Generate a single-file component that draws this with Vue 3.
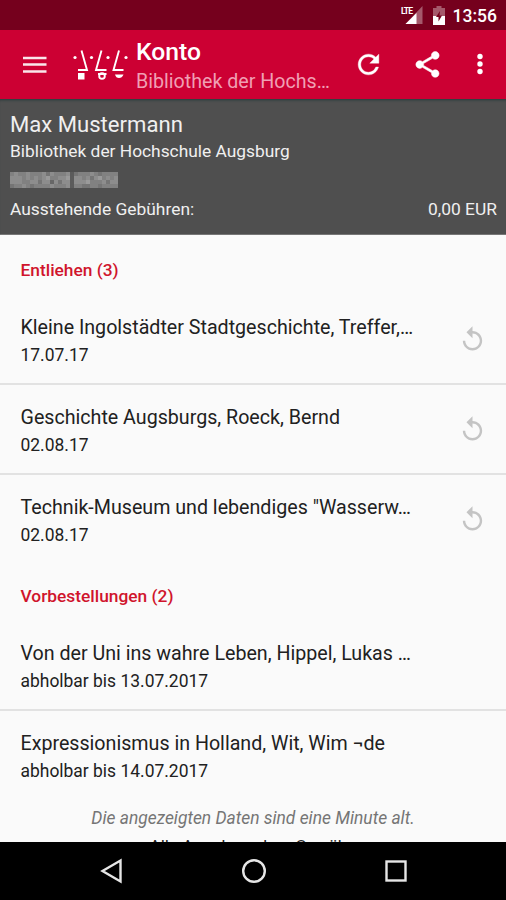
<template>
  <div class="screen">
    <div class="statusbar">
      <svg class="signal" width="22" height="20" viewBox="0 0 22 20">
        <path d="M21.500 1V19H4.500z" fill="#fff" opacity="0.35" />
        <path d="M15.500 8V19H4.500z" fill="#fff" />
        <text x="0" y="8.500" class="lte">LTE</text>
      </svg>
      <svg class="battery" width="12" height="19" viewBox="0 0 12 19">
        <path d="M3.500 2V0h5v2H12v8H0V2z" fill="#fff" opacity="0.35" />
        <path d="M0 10h12v9H0z" fill="#fff" />
        <path d="M7 5L3 11h2.500v4.500L9 9.500H6.500z" fill="#75001d" />
      </svg>
      <span class="clock">13:56</span>
    </div>

    <header class="toolbar">
      <svg class="menu" width="24" height="18" viewBox="0 0 24 18">
        <path d="M0 2H23.500M0 8.500H23.500M0 15.500H23.500" stroke="#fff" stroke-width="2.600" opacity="0.9" />
      </svg>
      <svg class="logo" width="56" height="32" viewBox="0 0 56 32">
        <g fill="none" stroke="#fff" stroke-width="1.900">
          <path d="M8.500 1.500L14 21H5" />
          <path d="M28.500 1.500L23 21H33.500" />
          <path d="M46 1.500L40.500 21H50.500" />
          <circle cx="29" cy="27" r="2.800" />
        </g>
        <g fill="#fff">
          <rect x="5" y="24" width="6.500" height="6.500" />
          <rect x="25" y="24" width="8.500" height="2" />
          <path d="M42 25.500H50.500Q49 29 46 29T42 25.500z" />
          <circle cx="2" cy="8.500" r="1.600" />
          <circle cx="18.500" cy="8.500" r="1.600" />
          <circle cx="35" cy="8.500" r="1.600" />
          <circle cx="53" cy="8.500" r="1.600" />
        </g>
      </svg>
      <div class="titles">
        <div class="title">Konto</div>
        <div class="subtitle">Bibliothek der Hochs…</div>
      </div>
      <svg class="refresh" width="31" height="31" viewBox="0 0 24 24" fill="#fff">
        <path d="M17.650 6.350C16.200 4.900 14.210 4 12 4c-4.420 0-7.990 3.580-7.990 8s3.570 8 7.990 8c3.730 0 6.840-2.550 7.730-6h-2.080c-.82 2.330-3.040 4-5.650 4-3.310 0-6-2.690-6-6s2.690-6 6-6c1.660 0 3.140.69 4.220 1.780L13 11h7V4l-2.350 2.350z" stroke="#fff" stroke-width="0.3" />
      </svg>
      <svg class="share" width="31" height="31" viewBox="0 0 24 24" fill="#fff">
        <path d="M18 16.080c-.76 0-1.440.3-1.960.77L8.910 12.700c.05-.23.09-.46.09-.7s-.04-.47-.09-.7l7.050-4.110c.54.5 1.250.81 2.040.81 1.660 0 3-1.340 3-3s-1.340-3-3-3-3 1.340-3 3c0 .24.04.47.09.7L8.040 9.810C7.500 9.310 6.790 9 6 9c-1.660 0-3 1.340-3 3s1.340 3 3 3c.79 0 1.500-.31 2.040-.81l7.120 4.160c-.05.21-.08.43-.08.65 0 1.610 1.310 2.920 2.920 2.920s2.920-1.310 2.920-2.920-1.310-2.920-2.920-2.920z" stroke="#fff" stroke-width="0.4" />
      </svg>
      <svg class="more" width="6" height="22" viewBox="0 0 6 22" fill="#fff">
        <circle cx="3" cy="3.500" r="2.700" />
        <circle cx="3" cy="11" r="2.700" />
        <circle cx="3" cy="18.500" r="2.700" />
      </svg>
    </header>

    <section class="account">
      <div class="name">Max Mustermann</div>
      <div class="library">Bibliothek der Hochschule Augsburg</div>
      <svg class="masked" width="110" height="16" viewBox="0 0 110 16">
        <rect
          v-for="(c, i) in maskCells"
          :key="i"
          :x="c.x"
          :y="c.y"
          width="4"
          height="4"
          fill="#fff"
          :opacity="c.opacity"
        />
      </svg>
      <div class="fees">
        <span>Ausstehende Gebühren:</span>
        <span>0,00 EUR</span>
      </div>
    </section>

    <main class="content">
      <section v-for="group in groups" :key="group.title">
        <h2 class="group-title">{{ group.title }} ({{ group.items.length }})</h2>
        <div v-for="item in group.items" :key="item.title" class="item">
          <div class="item-text">
            <div class="item-title">{{ item.title }}</div>
            <div class="item-info">{{ item.info }}</div>
          </div>
          <svg v-if="group.renewable" class="renew" width="29" height="29" viewBox="0 0 24 24" fill="#c4c4c4">
            <path d="M12 5V1L7 6l5 5V7c3.310 0 6 2.690 6 6s-2.690 6-6 6-6-2.690-6-6H4c0 4.420 3.580 8 8 8s8-3.580 8-8-3.580-8-8-8z" />
          </svg>
        </div>
      </section>
      <p class="age">Die angezeigten Daten sind eine Minute alt.</p>
      <p class="notice">Alle Angaben ohne Gewähr.</p>
    </main>

    <nav class="navbar">
      <svg width="24" height="26" viewBox="0 0 24 26">
        <path d="M20.500 2.500V23.500L2.500 13z" />
      </svg>
      <svg width="26" height="26" viewBox="0 0 26 26">
        <circle cx="13" cy="13" r="10.800" />
      </svg>
      <svg width="24" height="26" viewBox="0 0 24 26">
        <rect x="2.500" y="3.500" width="19" height="19" />
      </svg>
    </nav>
  </div>
</template>

<script setup>
const groups = [
  {
    title: 'Entliehen',
    renewable: true,
    items: [
      { title: 'Kleine Ingolstädter Stadtgeschichte, Treffer,…', info: '17.07.17' },
      { title: 'Geschichte Augsburgs, Roeck, Bernd', info: '02.08.17' },
      { title: 'Technik-Museum und lebendiges "Wasserw…', info: '02.08.17' }
    ]
  },
  {
    title: 'Vorbestellungen',
    renewable: false,
    items: [
      { title: 'Von der Uni ins wahre Leben, Hippel, Lukas …', info: 'abholbar bis 13.07.2017' },
      { title: 'Expressionismus in Holland, Wit, Wim ¬de', info: 'abholbar bis 14.07.2017' }
    ]
  }
]

// brightness of the pixelated account number, one digit per cell
const mask = [
  '454454445354445134445434444',
  '555454545644556155453564545',
  '555445535525355155564445355',
  '344543444454445144334434444'
]

const maskCells = mask.flatMap((row, y) =>
  [...row].map((v, x) => ({ x: x * 4, y: y * 4, opacity: v / 14 }))
)
</script>

<style>
body {
  margin: 0;
  background: #000;
}
</style>

<style scoped>
.screen {
  width: 506px;
  height: 900px;
  display: flex;
  flex-direction: column;
  overflow: hidden;
  background: #fafafa;
  font-family: Roboto, "Noto Sans", sans-serif;
  color: #212121;
}

.screen svg {
  display: block;
  flex: none;
}

.statusbar {
  flex: none;
  height: 30px;
  box-sizing: border-box;
  padding-right: 9px;
  display: flex;
  align-items: center;
  justify-content: flex-end;
  background: #75001d;
  color: #fff;
}

.signal {
  margin-right: 10px;
}

.battery {
  margin-right: 8px;
}

.lte {
  font-size: 8.500px;
  font-weight: 700;
  letter-spacing: -0.8px;
  fill: #fff;
}

.clock {
  font-size: 17.500px;
  font-weight: 500;
  line-height: 30px;
  padding-top: 2px;
}

.toolbar {
  flex: none;
  height: 69px;
  box-sizing: border-box;
  display: flex;
  align-items: center;
  padding: 0 23px;
  background: #cc0033;
  color: #fff;
}

.logo {
  margin-left: 26px;
}

.titles {
  width: 205px;
  margin-left: 7px;
  padding-top: 6px;
}

.title {
  font-size: 24.700px;
  font-weight: 500;
  line-height: 28px;
}

.subtitle {
  font-size: 19.650px;
  line-height: 32px;
  white-space: nowrap;
  color: #f09fb3;
}

.refresh {
  margin-left: 12px;
}

.share {
  margin: 0 0 1px 28px;
}

.more {
  margin: 0 0 1px 34px;
}

.account {
  flex: none;
  height: 136px;
  box-sizing: border-box;
  padding: 11px 9px 0 10px;
  background: #4f4f4f;
  color: #f0f0f0;
  box-shadow: inset 0 3px 3px -2px #233a3a, inset 0 -1px 0 #777;
}

.name {
  font-size: 22.100px;
  line-height: 29px;
}

.library {
  font-size: 17.350px;
  line-height: 25px;
}

.masked {
  margin-top: 8px;
}

.fees {
  display: flex;
  justify-content: space-between;
  margin-top: 9px;
  font-size: 17.400px;
  line-height: 24px;
}

.content {
  flex: 1;
  min-height: 0;
  overflow: hidden;
  padding-top: 4px;
}

.group-title {
  height: 56px;
  margin: 0;
  padding-left: 20.500px;
  font-size: 17.350px;
  font-weight: 500;
  line-height: 63px;
  color: #d0142c;
}

.item {
  height: 90px;
  box-sizing: border-box;
  display: flex;
  padding: 19px 19px 0 20.500px;
  border-bottom: 2px solid #e2e2e2;
}

.item:last-child {
  border-bottom-color: transparent;
}

.item-text {
  flex: 1;
}

.item-title {
  font-size: 19.650px;
  line-height: 27px;
  white-space: nowrap;
}

.item-info {
  font-size: 17.450px;
  line-height: 29px;
}

.renew {
  margin-top: 11px;
}

.age,
.notice {
  margin: 0;
  text-align: center;
  font-size: 17.400px;
  line-height: 28px;
}

.age {
  padding-top: 3px;
  font-style: italic;
  color: #757575;
}

.notice {
  font-size: 17px;
  line-height: 29px;
}

.navbar {
  flex: none;
  height: 58px;
  box-sizing: border-box;
  display: flex;
  align-items: center;
  justify-content: space-between;
  padding: 0 98px 0 100px;
  background: #000;
}

.navbar svg {
  fill: none;
  stroke: #e6e6e6;
  stroke-width: 2.400;
}
</style>
